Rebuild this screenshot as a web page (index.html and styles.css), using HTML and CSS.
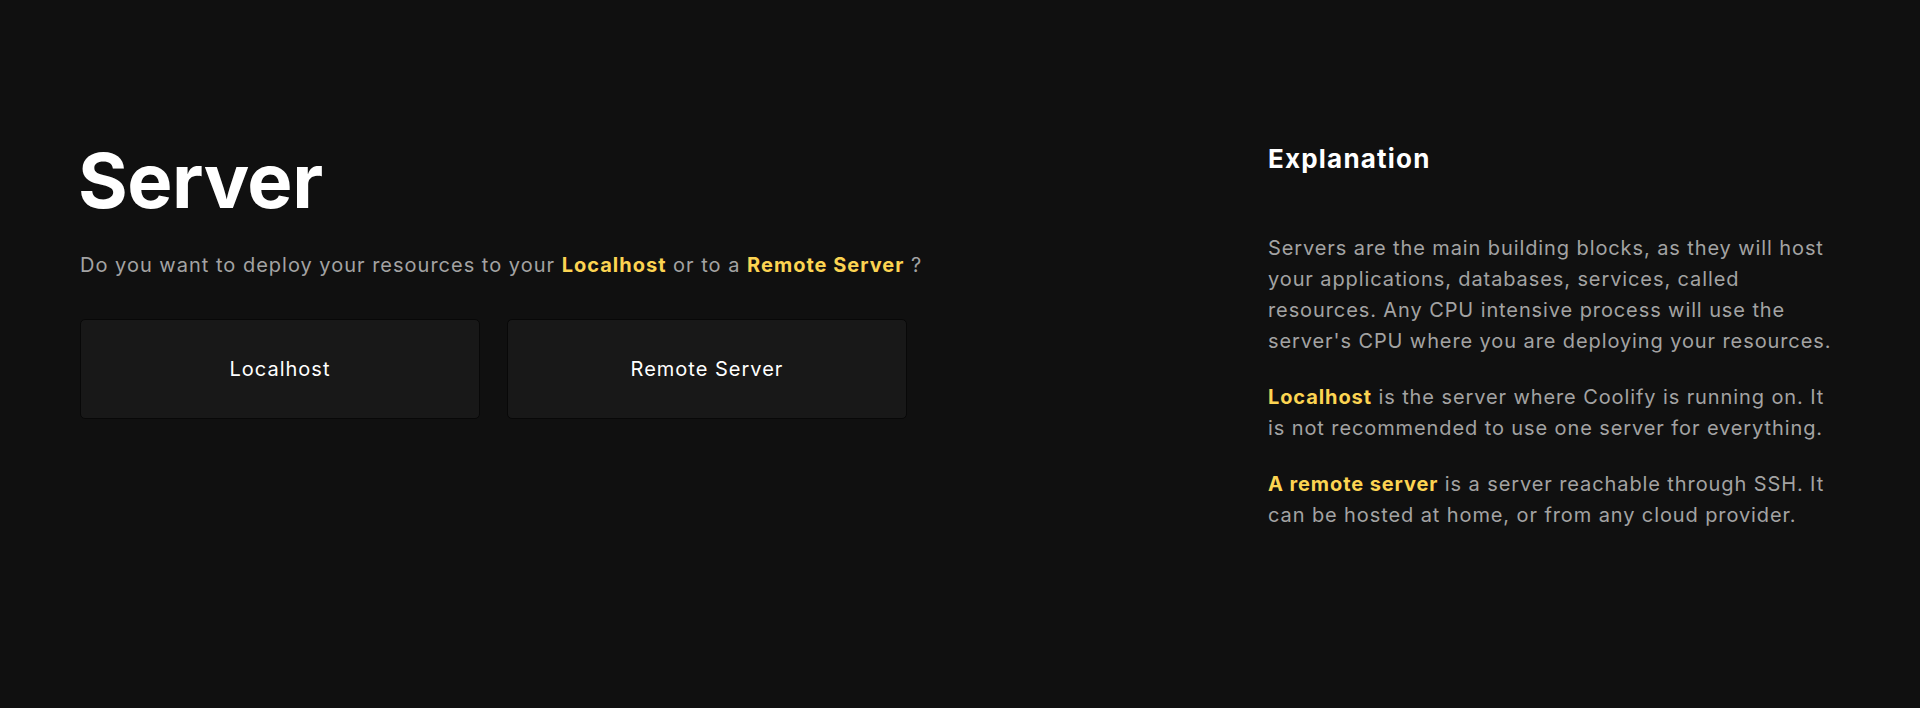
FILE: index.html
```html
<!DOCTYPE html>
<html lang="en">
<head>
<meta charset="UTF-8" />
<meta name="viewport" content="width=device-width, initial-scale=1.0"/>
<title>Server</title>
<link rel="stylesheet" href="styles.css">
</head>
<body>

<div id="page">
  <div id="main">
    <h1 class="title">Server</h1>
    <p class="subtitle">Do you want to deploy your resources to your <span class="highlight">Localhost</span> or to a <span class="highlight">Remote Server</span> ?</p>
    <div class="choices">
      <button class="choice">Localhost</button>
      <button class="choice">Remote Server</button>
    </div>
  </div>

  <div id="explanation">
    <h2 class="explanation-title">Explanation</h2>
    <p>Servers are the main building blocks, as they will host your applications, databases, services, called resources. Any CPU intensive process will use the server's CPU where you are deploying your resources.</p>
    <p><span class="highlight">Localhost</span> is the server where Coolify is running on. It is not recommended to use one server for everything.</p>
    <p><span class="highlight">A remote server</span> is a server reachable through SSH. It can be hosted at home, or from any cloud provider.</p>
  </div>
</div>

</body>
</html>
```

FILE: styles.css
```css
body {
  font-family: Inter, "Noto Sans", sans-serif;
  background-color: #101010;
  color: #a3a3a3;
  margin: 0;
  height: 100vh;
  letter-spacing: 1px;
}
#page {
  display: flex;
  padding: 142px 80px 0 80px;
}
#main {
  flex: 1;
}
.title {
  font-size: 76px;
  line-height: 1;
  font-weight: 700;
  letter-spacing: -0.5px;
  color: #fff;
  margin: 0 0 0 -2px;
}
.subtitle {
  font-size: 20px;
  line-height: 28px;
  margin: 33px 0 0 0;
}
.highlight {
  color: #fcd452;
  font-weight: 700;
}
.choices {
  display: flex;
  gap: 27px;
  margin-top: 40px;
}
.choice {
  width: 400px;
  height: 100px;
  background-color: #181818;
  border: 1px solid #080808;
  border-radius: 5px;
  color: #fff;
  font-family: Inter, "Noto Sans", sans-serif;
  font-size: 20px;
  letter-spacing: 1px;
}
#explanation {
  width: 572px;
  padding-top: 1px;
}
.explanation-title {
  font-size: 26px;
  line-height: 32px;
  font-weight: 700;
  letter-spacing: 1.2px;
  color: #fff;
  margin: 0 0 58px 0;
}
#explanation p {
  font-size: 20px;
  line-height: 31px;
  letter-spacing: 0.9px;
  margin: 0 0 25px 0;
}
```
